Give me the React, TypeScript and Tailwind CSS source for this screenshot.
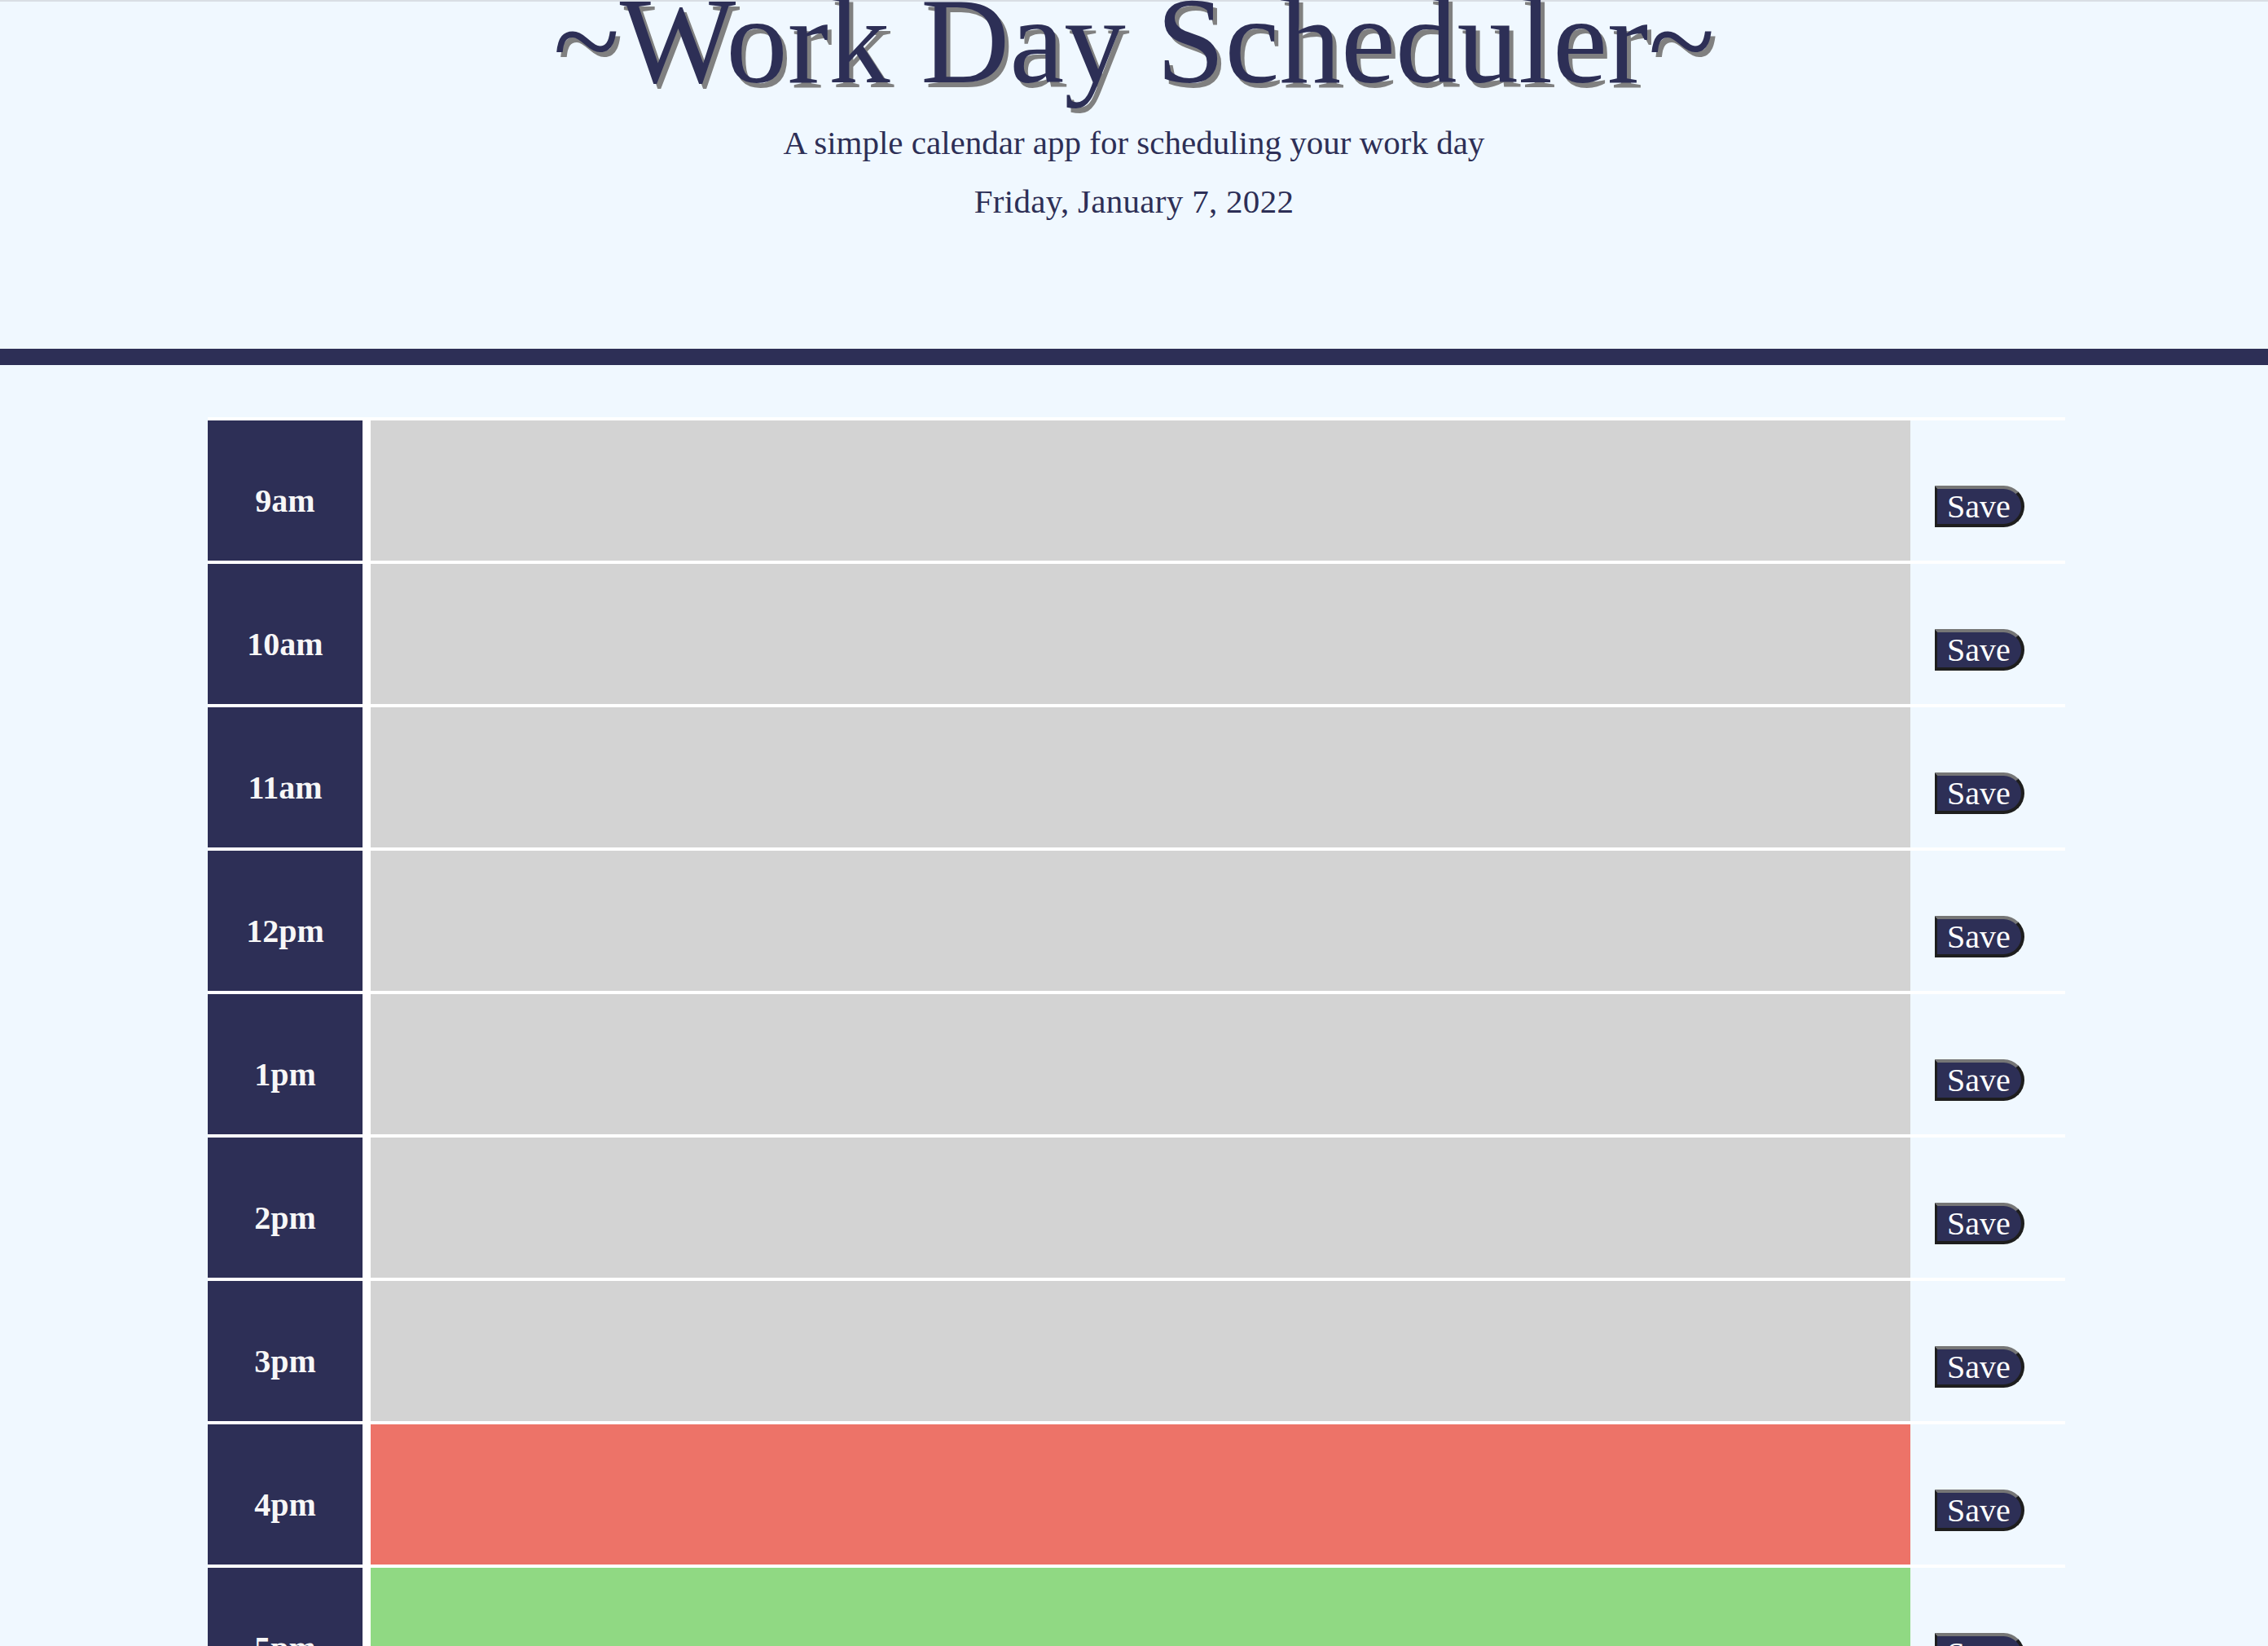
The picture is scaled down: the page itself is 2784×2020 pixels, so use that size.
import React from "react";

const serif = { fontFamily: '"Liberation Serif", "Times New Roman", serif' };

type Slot = { label: string; state: "past" | "present" | "future" };

const slots: Slot[] = [
    { label: "9am", state: "past" },
    { label: "10am", state: "past" },
    { label: "11am", state: "past" },
    { label: "12pm", state: "past" },
    { label: "1pm", state: "past" },
    { label: "2pm", state: "past" },
    { label: "3pm", state: "past" },
    { label: "4pm", state: "present" },
    { label: "5pm", state: "future" },
];

const stateBg = {
    past: "bg-[#d3d3d3]",
    present: "bg-[#ed7368]",
    future: "bg-[#90d983]",
};

const TimeBlock: React.FC<{ slot: Slot }> = ({ slot }) => {
    return <div className="flex h-[176px] border-t-4 border-white">
        <div className="w-[200px] h-full border-r-[10px] border-white bg-[#2d2f56]">
            <div className="pt-[75px] text-center text-[40px] leading-[48px] font-bold text-[#f7f7f7]">
                {slot.label}
            </div>
        </div>
        <textarea
            className={`flex-1 h-full resize-none border-0 outline-none p-3 text-[28px] ${stateBg[slot.state]}`}
            style={serif}
        />
        <div className="w-[190px] h-full pl-[30px] pt-[80px]">
            <button
                className="w-[110px] h-[51px] flex items-center pl-[12px] bg-[#2d2f56] text-white text-[40px] leading-none rounded-r-[26px] border-t-4 border-r-4 border-b-4 border-l-[3px] border-t-[#767676] border-r-[#1e1e1e] border-b-[#1e1e1e] border-l-[#1e1e1e]"
                style={serif}
            >
                Save
            </button>
        </div>
    </div>
};

export default function App() {
    return <div className="min-h-screen bg-[#f0f8ff] text-[#2d2f56]" style={serif}>
        <header className="border-t-2 border-[#d9dee4] border-b-[20px] border-b-[#2d2f56] pb-[157px] text-center">
            <h1 className="text-[151px] leading-[96px] font-normal [text-shadow:5px_6px_0_#808080]">~Work Day Scheduler~</h1>
            <p className="mt-[53px] text-[41px] leading-[48px]">A simple calendar app for scheduling your work day</p>
            <p className="mt-[24px] text-[41px] leading-[48px] tracking-[0.3px]">Friday, January 7, 2022</p>
        </header>
        <main className="ml-[255px] w-[2280px] pt-[64px] pb-[60px]">
            {slots.map((slot) => (
                <TimeBlock key={slot.label} slot={slot} />
            ))}
        </main>
    </div>
}
